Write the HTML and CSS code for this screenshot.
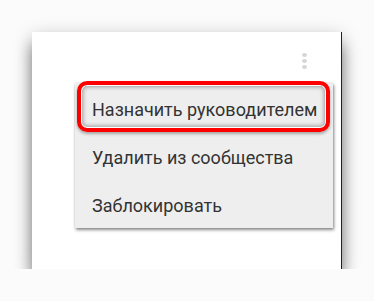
FILE: index.html
```html
<!DOCTYPE html>
<html lang="ru">
<head>
<meta charset="utf-8">
<link rel="stylesheet" href="styles.css">
</head>
<body>
<div class="card">
  <div class="toolbar">
    <div class="more"><span class="dot"></span><span class="dot"></span><span class="dot"></span></div>
  </div>
  <ul class="menu">
    <li class="item highlighted">Назначить руководителем</li>
    <li class="item">Удалить из сообщества</li>
    <li class="item">Заблокировать</li>
  </ul>
</div>
</body>
</html>
```
FILE: styles.css
```css
html, body {
  margin: 0;
  padding: 0;
  background: #fbfbfb;
}
body {
  padding: 32px 0 0 32px;
  font-family: Roboto, "Noto Sans", sans-serif;
}
.card {
  box-sizing: border-box;
  width: 310px;
  height: 237px;
  background: #ffffff;
  border-right: 1px solid #222;
  box-shadow: 0 14px 14px rgba(0,0,0,0.42), 0 4px 18px rgba(0,0,0,0.22);
  padding-top: 21px;
}
.toolbar {
  display: flex;
  justify-content: flex-end;
  padding-right: 34px;
  height: 16px;
}
.more {
  display: flex;
  flex-direction: column;
  gap: 2px;
  width: 5px;
}
.dot {
  width: 5px;
  height: 5px;
  border-radius: 50%;
  background: #d6d6d6;
}
.menu {
  list-style: none;
  margin: 14px 0 0 43px;
  padding: 3px 0 0;
  width: 258px;
  background: #eeeeee;
  box-shadow: 1px 2px 3px rgba(0,0,0,0.45), 0 0 2px rgba(0,0,0,0.15);
}
.item {
  height: 48px;
  line-height: 48px;
  padding-left: 17px;
  font-size: 18px;
  color: #333;
  position: relative;
}
.item:last-child {
  height: 46px;
}
.highlighted::after {
  content: "";
  position: absolute;
  top: -5px;
  left: 2px;
  right: 3px;
  bottom: 2px;
  border: 4px solid #ff0000;
  border-radius: 10px;
  box-shadow: inset 0 0 0 1px #fff, inset 0 0 4px 2px rgba(0,0,0,0.35), 0 2px 3px rgba(0,0,0,0.3);
}
```
